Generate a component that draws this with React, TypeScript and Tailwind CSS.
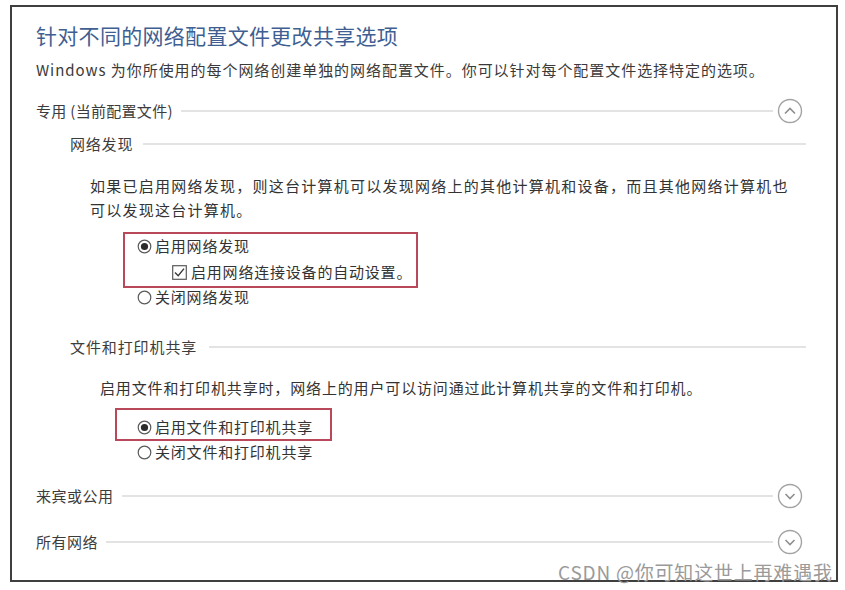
import React from 'react';

// Windows "Advanced sharing settings" page, scanned look

const font = { fontFamily: '"Noto Sans CJK SC", "Noto Sans", sans-serif' };

const Rule: React.FC<{ className?: string }> = ({ className = '' }) => (
  <div className={`h-[2px] flex-1 bg-[#e3e3e3] ${className}`} />
);

const CircleChevron: React.FC<{ up?: boolean }> = ({ up = false }) => (
  <svg width="26" height="26" viewBox="0 0 26 26" className="shrink-0">
    <circle cx="13" cy="13" r="11.5" fill="none" stroke="#a3a3a3" strokeWidth="1.4" />
    {up ? (
      <path d="M8 15.5 L13 10.5 L18 15.5" fill="none" stroke="#8f8f8f" strokeWidth="1.6" />
    ) : (
      <path d="M8.5 11 L13 15.5 L17.5 11" fill="none" stroke="#8f8f8f" strokeWidth="1.6" />
    )}
  </svg>
);

const Radio: React.FC<{ checked?: boolean }> = ({ checked = false }) => (
  <svg width="15" height="15" viewBox="0 0 15 15" className="shrink-0">
    <circle cx="7.5" cy="7.5" r="6.3" fill="white" stroke="#5a5a5a" strokeWidth="1.2" />
    {checked && <circle cx="7.5" cy="7.5" r="3.6" fill="#2b2b2b" />}
  </svg>
);

const Checkbox: React.FC = () => (
  <svg width="15" height="15" viewBox="0 0 15 15" className="shrink-0">
    <rect x="0.7" y="0.7" width="13.6" height="13.6" fill="white" stroke="#5a5a5a" strokeWidth="1.2" />
    <path d="M3 7.5 L6.2 10.8 L12 3.6" fill="none" stroke="#3a3a3a" strokeWidth="1.4" />
  </svg>
);

const SectionHead: React.FC<{ label: string }> = ({ label }) => (
  <div className="mt-[20px] flex h-[26px] items-center pr-[33px]">
    <span className="text-[15px] tracking-[0.5px] text-[#3c3c3c]">{label}</span>
    <Rule className="ml-[8px] mr-[4px]" />
    <CircleChevron />
  </div>
);

const App: React.FC = () => {
  return (
    <div className="relative h-[590px] w-[845px] overflow-hidden bg-white" style={font}>
      <div className="ml-[10px] mt-[5px] h-[577px] w-[828px] border-2 border-[#3f3f3f] pl-[24px] pt-[14px]">
        {/* Title */}
        <div className="flex h-[30px] items-center text-[21px] tracking-[0.3px] text-[#3f5f92]">
          针对不同的网络配置文件更改共享选项
        </div>
        <div className="mt-[7px] flex h-[24px] items-center text-[15px] tracking-[0.95px] text-[#3a3a3a]">
          Windows 为你所使用的每个网络创建单独的网络配置文件。你可以针对每个配置文件选择特定的选项。
        </div>

        {/* Private */}
        <div className="mt-[17px] flex h-[24px] items-center pr-[33px]">
          <span className="text-[15px] tracking-[0.3px] text-[#3c3c3c]">专用 (当前配置文件)</span>
          <Rule className="ml-[8px] mr-[4px]" />
          <CircleChevron up />
        </div>

        {/* Network discovery */}
        <div className="ml-[34px] mt-[9px] flex h-[24px] items-center pr-[30px]">
          <span className="text-[15px] tracking-[0.8px] text-[#3c3c3c]">网络发现</span>
          <Rule className="ml-[10px]" />
        </div>
        <div className="ml-[54px] mt-[18px] w-[710px] text-[15px] leading-[24px] tracking-[1.25px] text-[#333]">
          如果已启用网络发现，则这台计算机可以发现网络上的其他计算机和设备，而且其他网络计算机也可以发现这台计算机。
        </div>
        <div className="ml-[87px] mt-[10px] w-[295px] border-2 border-[#b8485a] pb-[2px] pl-[12px]">
          <div className="flex h-[24px] items-center gap-[3px] text-[15px] tracking-[0.8px] text-[#333]">
            <Radio checked />
            <span>启用网络发现</span>
          </div>
          <div className="mt-[2px] flex h-[24px] items-center gap-[4px] pl-[35px] text-[15px] tracking-[0.8px] text-[#333]">
            <Checkbox />
            <span>启用网络连接设备的自动设置。</span>
          </div>
        </div>
        <div className="ml-[101px] flex h-[18px] items-center gap-[3px] text-[15px] tracking-[0.8px] text-[#333]">
          <Radio />
          <span>关闭网络发现</span>
        </div>

        {/* File and printer sharing */}
        <div className="ml-[34px] mt-[29px] flex h-[24px] items-center pr-[30px]">
          <span className="text-[15px] tracking-[0.9px] text-[#3c3c3c]">文件和打印机共享</span>
          <Rule className="ml-[12px]" />
        </div>
        <div className="ml-[64px] mt-[17px] flex h-[24px] items-center text-[15px] tracking-[0.85px] text-[#333]">
          启用文件和打印机共享时，网络上的用户可以访问通过此计算机共享的文件和打印机。
        </div>
        <div className="ml-[79px] mt-[8px] w-[217px] border-2 border-[#b8485a] pb-[1px] pl-[20px] pt-[6px]">
          <div className="flex h-[22px] items-center gap-[3px] text-[15px] tracking-[0.8px] text-[#333]">
            <Radio checked />
            <span>启用文件和打印机共享</span>
          </div>
        </div>
        <div className="ml-[101px] flex h-[22px] items-center gap-[3px] text-[15px] tracking-[0.8px] text-[#333]">
          <Radio />
          <span>关闭文件和打印机共享</span>
        </div>

        {/* Guest / public, all networks */}
        <SectionHead label="来宾或公用" />
        <SectionHead label="所有网络" />
      </div>

      {/* Watermark */}
      <div className="absolute left-[558px] top-[559px] text-[19px] leading-[26px] tracking-[0.8px] text-[#9a9a9a]">
        CSDN @你可知这世上再难遇我
      </div>
    </div>
  );
};

export default App;
